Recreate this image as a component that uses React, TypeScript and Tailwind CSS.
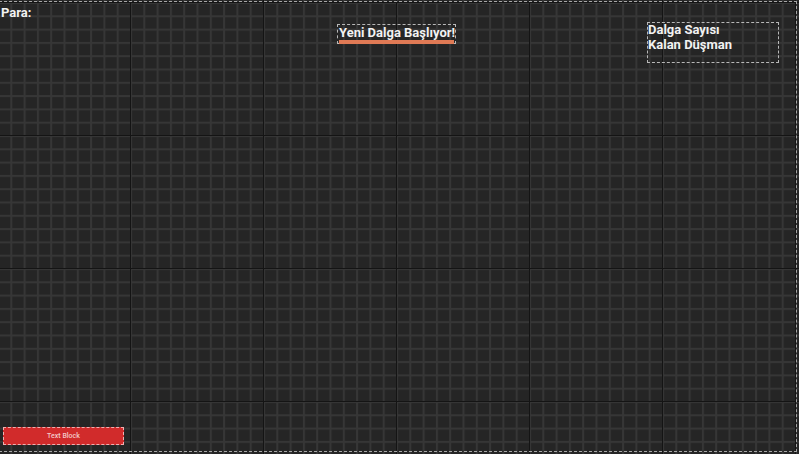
import React from "react";

function Grid() {
  return (
    <svg className="absolute inset-0" width="799" height="454">
      <defs>
        <pattern id="minor" x="-3" y="2" width="13.3" height="13.3" patternUnits="userSpaceOnUse">
          <rect x="0" y="0" width="13.3" height="2" fill="#363636" />
          <rect x="0" y="0" width="2" height="13.3" fill="#363636" />
        </pattern>
        <pattern id="major" x="-3" y="2" width="133" height="133" patternUnits="userSpaceOnUse">
          <rect x="-1" y="-1" width="135" height="2" fill="#141414" />
          <rect x="-1" y="-1" width="2" height="135" fill="#141414" />
        </pattern>
      </defs>
      <rect width="799" height="454" fill="#252525" />
      <rect width="799" height="454" fill="url(#minor)" />
      <rect width="799" height="454" fill="url(#major)" />
    </svg>
  );
}

export default function App() {
  return (
    <div
      className="relative w-[799px] h-[454px] overflow-hidden bg-[#252525] text-[#f2f2f2]"
      style={{ fontFamily: "Roboto, 'Liberation Sans', sans-serif" }}
    >
      <Grid />
      {/* outer canvas border (selection outline over the canvas) */}
      <div className="absolute left-[-1px] top-[1px] w-[798px] h-[451px] border border-dashed border-[#a8a8a8]" />

      <div className="relative flex h-full flex-col justify-between pb-[9px]">
        {/* top row of widgets */}
        <div className="flex items-start pl-[1px]">
          <div className="mt-[5px] w-[336px] text-[13px] font-bold leading-[15px]">Para:</div>

          <div className="relative mt-[24px] w-[119px] h-[20px] border border-dashed border-[#b8b8b8]">
            <div className="absolute left-[1px] right-[1px] top-[15px] h-[4px] bg-[#e07a55]" />
            <div className="relative pl-[1px] text-[13px] font-bold leading-[15px] whitespace-nowrap">
              Yeni Dalga Başlıyor!
            </div>
          </div>

          <div className="ml-[191px] mt-[22px] w-[132px] h-[41px] border border-dashed border-[#b8b8b8] flex flex-col text-[13px] font-bold leading-[14.5px]">
            <span>Dalga Sayısı</span>
            <span>Kalan Düşman</span>
          </div>
        </div>

        {/* bottom row */}
        <div className="flex pl-[3px]">
          <div className="w-[121px] h-[18px] bg-[#d12b2b] border border-dashed border-[#f0b0b0] flex items-center justify-center">
            <span className="text-[7px] leading-none font-medium text-[#f3c9c9]">Text Block</span>
          </div>
        </div>
      </div>
    </div>
  );
}
